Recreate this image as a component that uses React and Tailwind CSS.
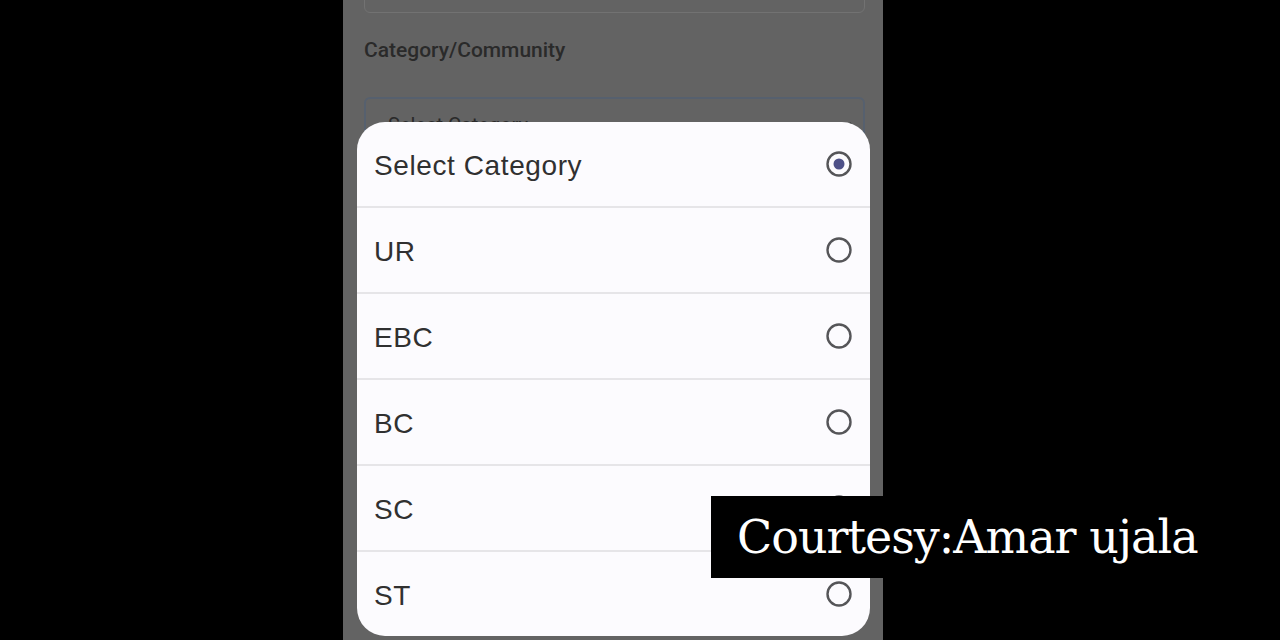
const options = ['Select Category', 'UR', 'EBC', 'BC', 'SC', 'ST']

function Radio({ checked }) {
  return (
    <svg width="28" height="28" viewBox="0 0 28 28" className="shrink-0">
      <circle cx="14" cy="14" r="11.5" fill="none" stroke="#555558" strokeWidth="2.4" />
      {checked && <circle cx="14" cy="14" r="5.5" fill="#4d5088" />}
    </svg>
  )
}

export default function App() {
  return (
    <div className="relative w-full h-[640px] bg-black overflow-hidden flex pl-[343px]">
      {/* dimmed phone screen */}
      <div className="relative w-[540px] h-[640px] bg-[#636363] overflow-hidden font-['Roboto',sans-serif]">
        <div className="flex flex-col pl-[21px] pr-[18px]">
          <div className="h-[50px] -mt-[37px] border border-[#727272] rounded-[6px]" />
          <div className="mt-[25px] text-[21px] leading-[24px] font-medium text-[#2a2a2a]">Category/Community</div>
          <div className="mt-[35px] h-[52px] border-2 border-[#56606e] rounded-[6px] flex items-center justify-between pl-[22px] pr-[10px]">
            <span className="text-[20px] text-[#2a2a2a] mt-[4px]">Select Category</span>
            <svg width="14" height="10" viewBox="0 0 14 10" className="mt-[6px]">
              <path d="M2 2l5 5 5-5" fill="none" stroke="#2a2a2a" strokeWidth="2" />
            </svg>
          </div>
        </div>

        {/* picker dialog */}
        <div className="absolute left-[14px] top-[122px] w-[513px] h-[514px] bg-[#fcfbfe] rounded-[28px] overflow-hidden flex flex-col font-['Liberation_Sans',Arial,sans-serif]">
          {options.map((opt, i) => (
            <div
              key={opt}
              className={
                'flex-1 flex items-center justify-between pl-[17px] pr-[17px] ' +
                (i > 0 ? 'border-t-2 border-[#e6e5e8]' : '')
              }
            >
              <span className="text-[28px] tracking-[0.6px] text-[#303030] mt-[4px]">{opt}</span>
              <Radio checked={i === 0} />
            </div>
          ))}
        </div>
      </div>

      {/* caption overlay */}
      <div className="absolute left-[711px] top-[496px] w-[569px] h-[82px] bg-black flex items-center pl-[26px]">
        <span className="text-white text-[46px] leading-none font-['DejaVu_Serif',serif] tracking-[-1px]">Courtesy:Amar ujala</span>
      </div>
    </div>
  )
}
